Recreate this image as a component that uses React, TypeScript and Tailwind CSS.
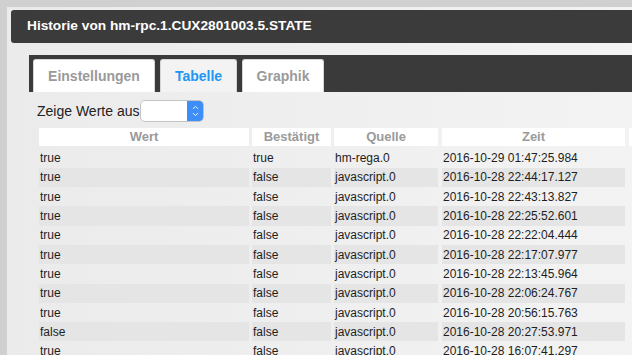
import { ChevronUp, ChevronDown } from 'lucide-react';

const rows: [string, string, string, string][] = [
  ['true', 'true', 'hm-rega.0', '2016-10-29 01:47:25.984'],
  ['true', 'false', 'javascript.0', '2016-10-28 22:44:17.127'],
  ['true', 'false', 'javascript.0', '2016-10-28 22:43:13.827'],
  ['true', 'false', 'javascript.0', '2016-10-28 22:25:52.601'],
  ['true', 'false', 'javascript.0', '2016-10-28 22:22:04.444'],
  ['true', 'false', 'javascript.0', '2016-10-28 22:17:07.977'],
  ['true', 'false', 'javascript.0', '2016-10-28 22:13:45.964'],
  ['true', 'false', 'javascript.0', '2016-10-28 22:06:24.767'],
  ['true', 'false', 'javascript.0', '2016-10-28 20:56:15.763'],
  ['false', 'false', 'javascript.0', '2016-10-28 20:27:53.971'],
  ['true', 'false', 'javascript.0', '2016-10-28 16:07:41.297'],
];

const cols = ['w-[210px]', 'w-[79px]', 'w-[104px]', 'w-[183px]'];

function Tab({ label, width, active }: { label: string; width: string; active?: boolean }) {
  return (
    <div
      className={
        width +
        ' shrink-0 h-[33px] flex items-center justify-center rounded-t-[3px] border border-b-0 border-[#d6d6d6] text-[14px] font-bold ' +
        (active ? 'bg-[#f3f3f3] text-[#2196f3]' : 'bg-white text-[#9a9a9a]')
      }
    >
      {label}
    </div>
  );
}

export default function App() {
  return (
    <div className="w-[632px] h-[355px] overflow-hidden bg-[#d0d0d0] font-['Liberation_Sans',Arial,sans-serif]">
      <div className="ml-[7px] mt-[7px] w-[700px] h-[400px] pl-[4px] pt-[3px] bg-gradient-to-r from-[#ebebeb] to-[#f4f4f4]">
        {/* Dialog header */}
        <div className="h-[33px] rounded-[3px] bg-[#3b3b3b] flex items-center pl-[16px] text-white text-[13.7px] font-bold">
          Historie von hm-rpc.1.CUX2801003.5.STATE
        </div>

        {/* Tabs */}
        <div className="mt-[12px] ml-[18px] h-[37px] bg-[#3a3a3a] flex items-end gap-[5px] pl-[4px]">
          <Tab label="Einstellungen" width="w-[122px]" />
          <Tab label="Tabelle" width="w-[77px]" active />
          <Tab label="Graphik" width="w-[82px]" />
        </div>

        <div className="pl-[26px]">
          {/* Filter */}
          <div className="mt-[8px] h-[22px] flex items-center">
            <span className="text-[14px] text-[#222]">Zeige Werte aus</span>
            <div className="ml-px w-[64px] h-[22px] rounded-[5px] border border-[#c4c4c4] bg-white flex justify-end overflow-hidden">
              <div className="w-[16px] h-full bg-[#3d8ef7] flex flex-col items-center justify-center text-white">
                <ChevronUp size={9} strokeWidth={2.5} className="-mb-[1px]" />
                <ChevronDown size={9} strokeWidth={2.5} className="-mt-[1px]" />
              </div>
            </div>
          </div>

          {/* Table */}
          <div className="mt-[6px] ml-[2px]">
            <div className="flex gap-[3px] h-[18px]">
              {['Wert', 'Bestätigt', 'Quelle', 'Zeit', ''].map((h, i) => (
                <div
                  key={i}
                  className={
                    (cols[i] ?? 'w-[40px] ml-px') +
                    (i === 3 ? ' ml-px' : '') +
                    ' shrink-0 bg-white flex items-center justify-center text-[13px] font-bold text-[#9a9a9a]'
                  }
                >
                  {h}
                </div>
              ))}
            </div>
            <div className="mt-[2.5px]">
              {rows.map((r, ri) => (
                <div key={ri} className="flex gap-[3px] h-[19.3px]">
                  {r.map((c, ci) => (
                    <div
                      key={ci}
                      className={
                        cols[ci] +
                        ' shrink-0 flex items-center pl-px text-[12px] text-[#1e1e1e] ' +
                        (ci === 3 ? 'ml-px ' : '') +
                        (ri % 2 === 1 ? 'bg-[#e5e5e5]' : '')
                      }
                    >
                      {c}
                    </div>
                  ))}
                </div>
              ))}
            </div>
          </div>
        </div>
      </div>
    </div>
  );
}
